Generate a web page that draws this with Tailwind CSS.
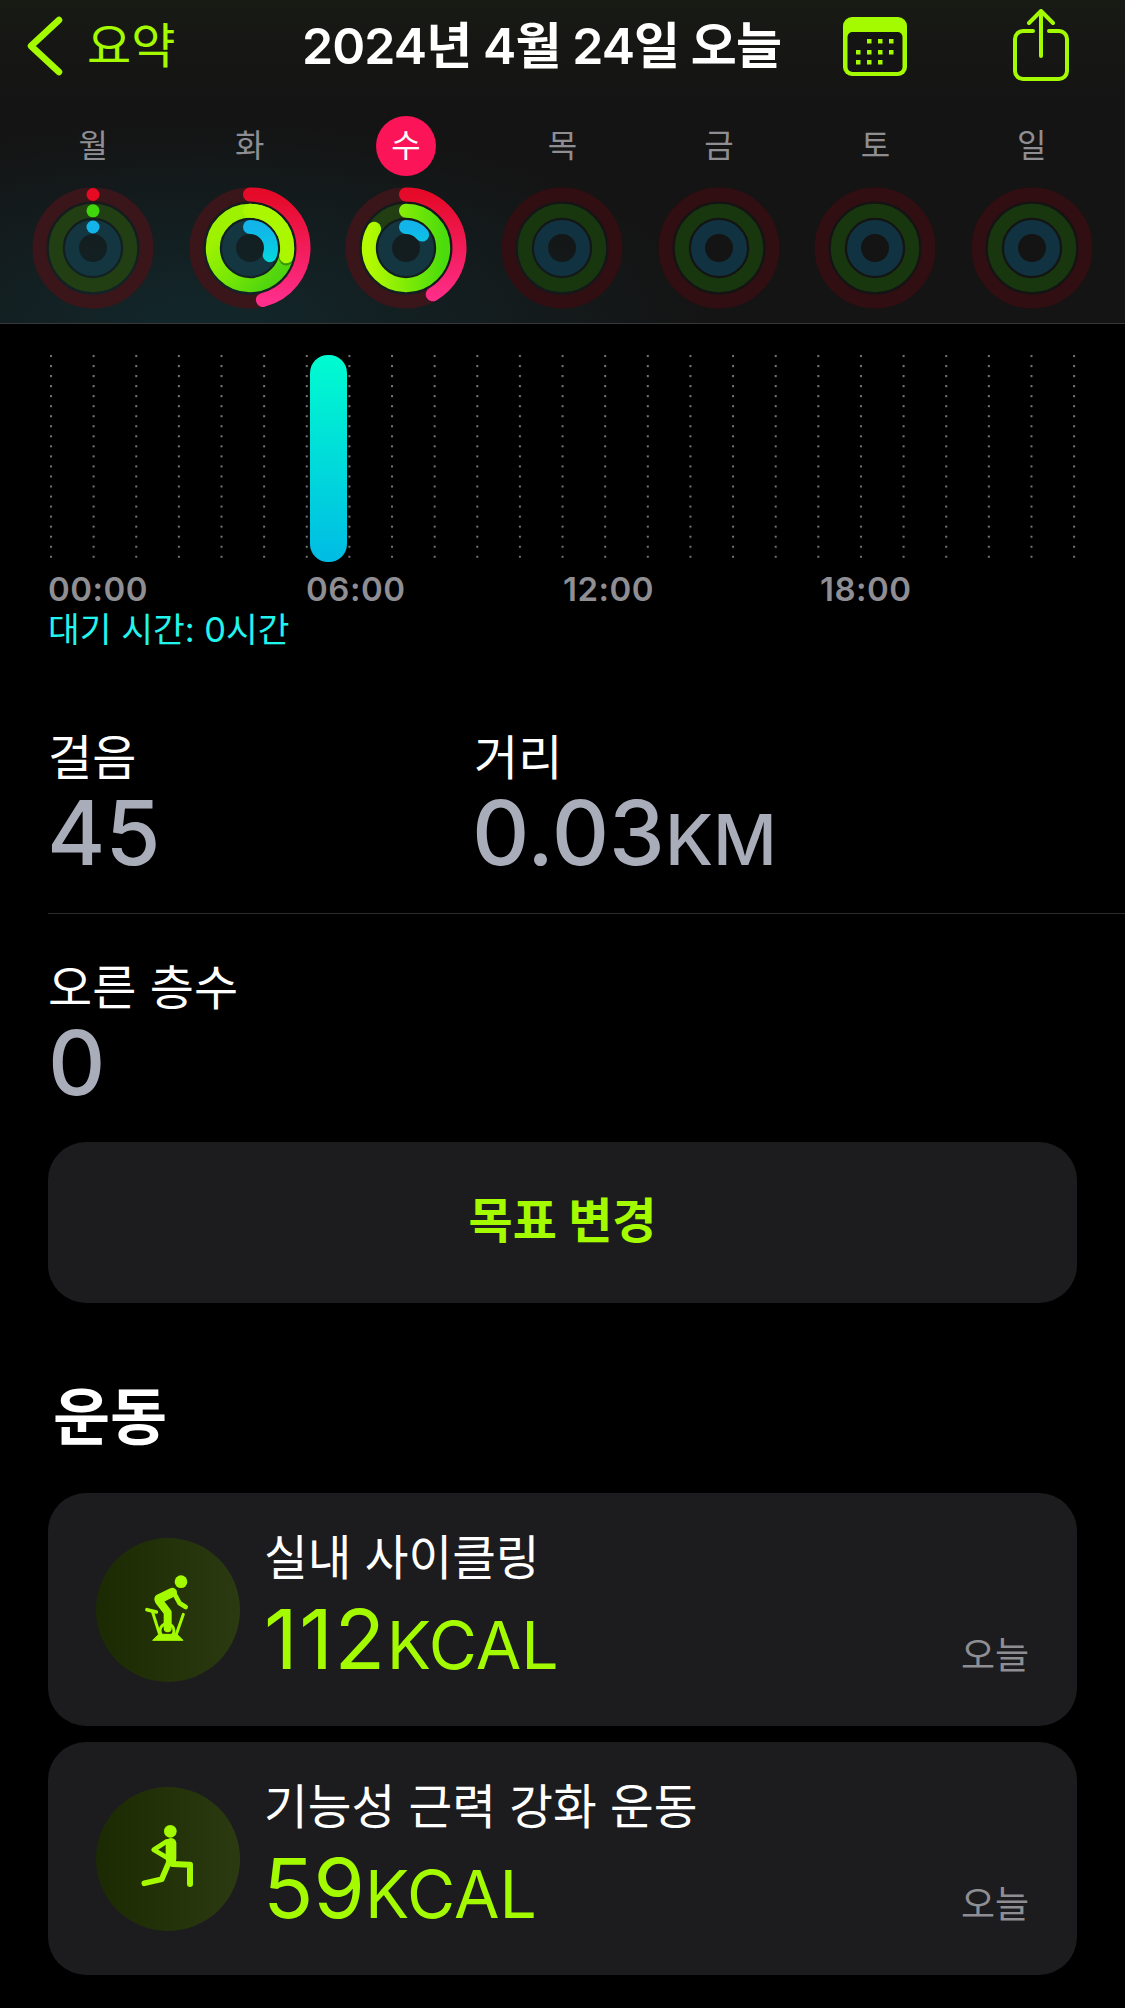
<!DOCTYPE html>
<html lang="ko">
<head>
    <meta charset="UTF-8">
    <title>활동 요약</title>
    <script src="https://cdn.jsdelivr.net/npm/@tailwindcss/browser@4"></script>
</head>
<body class="bg-black">
    <!-- Shared ring defs -->
    <svg class="absolute w-0 h-0">
        <defs>
            <linearGradient id="redArc" x1="1" y1="0" x2="0" y2="0"><stop offset="0" stop-color="#e50a28"/><stop offset="1" stop-color="#ff2e8c"/></linearGradient>
            <linearGradient id="greenFull" x1="0.9" y1="0.85" x2="0.2" y2="0.2"><stop offset="0" stop-color="#4fd40f"/><stop offset="0.5" stop-color="#78e804"/><stop offset="1" stop-color="#9ef200"/></linearGradient>
            <linearGradient id="greenArc" x1="0.5" y1="1" x2="0.5" y2="0"><stop offset="0" stop-color="#4cdc0c"/><stop offset="1" stop-color="#b4fa00"/></linearGradient>
            <linearGradient id="blueArc" x1="1" y1="0" x2="0" y2="0"><stop offset="0" stop-color="#12b4ea"/><stop offset="1" stop-color="#00dfdc"/></linearGradient>
            <linearGradient id="standBar" x1="0" y1="0" x2="0" y2="1"><stop offset="0" stop-color="#00fcd0"/><stop offset="1" stop-color="#00bce4"/></linearGradient>
            <pattern id="dots" x="0" y="0" width="42.63" height="10.04" patternUnits="userSpaceOnUse"><rect x="2" y="0" width="2" height="2" fill="#77777c"/></pattern>
            <symbol id="ringsEmpty" viewBox="0 0 122 122">
                <circle cx="61" cy="61" r="53.5" fill="none" stroke="#300e12" stroke-width="14"/>
                <circle cx="61" cy="61" r="37.2" fill="none" stroke="#19370f" stroke-width="14"/>
                <circle cx="61" cy="61" r="21" fill="none" stroke="#113240" stroke-width="14"/>
            </symbol>
        </defs>
    </svg>

    <div class="w-[1125px] h-[2008px] overflow-hidden bg-black text-white font-['Inter','Noto_Sans_CJK_KR',sans-serif]">
        <!-- Header -->
        <header class="h-[324px] border-b border-[#38383a] bg-[radial-gradient(ellipse_500px_200px_at_18%_100%,#12272b_0%,#14181a00_100%),linear-gradient(180deg,#181a14_0%,#141414_30%)]">
            <div class="h-[92px] flex items-center relative">
                <svg class="ml-[27px] w-[36px] h-[60px]" viewBox="0 0 36 60" fill="none" stroke="#a4fb00" stroke-width="6.5" stroke-linecap="round" stroke-linejoin="round"><path d="M32 4 L4 30 L32 56"/></svg>
                <span class="ml-[24px] w-[92px] text-[48px] leading-none text-[#a4fb00] whitespace-nowrap">요약</span>
                <h1 class="ml-[123px] w-[483px] text-[50px] leading-none font-semibold tracking-[-0.9px] whitespace-nowrap">2024년 4월 24일 오늘</h1>
                <svg class="ml-[58px] w-[64px] h-[59px]" viewBox="0 0 64 59">
                    <rect width="64" height="59" rx="9" fill="#a4fb00"/>
                    <rect x="4.5" y="15" width="55" height="40" rx="5" fill="#141414"/>
                    <g fill="#a4fb00">
                        <rect x="24" y="22" width="4.5" height="4.5"/><rect x="35" y="22" width="4.5" height="4.5"/><rect x="46" y="22" width="4.5" height="4.5"/>
                        <rect x="13" y="33" width="4.5" height="4.5"/><rect x="24" y="33" width="4.5" height="4.5"/><rect x="35" y="33" width="4.5" height="4.5"/><rect x="46" y="33" width="4.5" height="4.5"/>
                        <rect x="13" y="43" width="4.5" height="4.5"/><rect x="24" y="43" width="4.5" height="4.5"/><rect x="35" y="43" width="4.5" height="4.5"/>
                    </g>
                </svg>
                <svg class="ml-[106px] w-[56px] h-[72px] -mt-[2px]" viewBox="0 0 56 72" fill="none" stroke="#a4fb00" stroke-width="4" stroke-linecap="round" stroke-linejoin="round">
                    <path d="M20 22 H10 a8 8 0 0 0 -8 8 V62 a8 8 0 0 0 8 8 H46 a8 8 0 0 0 8 -8 V30 a8 8 0 0 0 -8 -8 H36"/>
                    <path d="M28 47 V3 M16 14 L28 2 L40 14"/>
                </svg>
            </div>

            <!-- Week rings -->
            <div class="grid grid-cols-7 pl-[15px] pr-[15px]">
                <div class="flex flex-col items-center">
                    <div class="h-[60px] flex items-center text-[#8e8e93] text-[32px] leading-none mt-[24px]">월</div>
                    <svg class="w-[122px] h-[122px] mt-[11px]" viewBox="0 0 122 122">
                        <circle cx="61" cy="61" r="53.5" fill="none" stroke="#3a1519" stroke-width="14"/>
                        <circle cx="61" cy="61" r="37.2" fill="none" stroke="#213f12" stroke-width="14"/>
                        <circle cx="61" cy="61" r="21" fill="none" stroke="#143640" stroke-width="14"/>
                        <circle cx="61" cy="7.5" r="6.5" fill="#e60a22"/><circle cx="61" cy="23.8" r="6.5" fill="#3fd60c"/><circle cx="61" cy="40" r="6.5" fill="#12b4ea"/>
                    </svg>
                </div>
                <div class="flex flex-col items-center">
                    <div class="h-[60px] flex items-center text-[#8e8e93] text-[32px] leading-none mt-[24px]">화</div>
                    <svg class="w-[122px] h-[122px] mt-[11px]" viewBox="0 0 122 122" fill="none" stroke-width="14" stroke-linecap="round">
                        <circle cx="61" cy="61" r="53.5" stroke="#3a1519"/>
                        <circle cx="61" cy="61" r="37.2" stroke="url(#greenFull)"/>
                        <circle cx="61" cy="61" r="21" stroke="#143640"/>
                        <circle cx="61" cy="61" r="53.5" stroke="url(#redArc)" pathLength="360" stroke-dasharray="166 400" transform="rotate(-90 61 61)"/>
                        <circle cx="97" cy="71.5" r="7" fill="#000" fill-opacity="0.3" stroke="none"/>
                        <circle cx="61" cy="61" r="37.2" stroke="#aaf700" pathLength="360" stroke-dasharray="103 400" transform="rotate(-90 61 61)"/>
                        <circle cx="61" cy="61" r="21" stroke="url(#blueArc)" pathLength="360" stroke-dasharray="110 400" transform="rotate(-90 61 61)"/>
                    </svg>
                </div>
                <div class="flex flex-col items-center">
                    <div class="w-[60px] h-[60px] rounded-full bg-[#fb1457] text-white flex items-center justify-center text-[32px] leading-none mt-[24px]">수</div>
                    <svg class="w-[122px] h-[122px] mt-[11px]" viewBox="0 0 122 122" fill="none" stroke-width="14" stroke-linecap="round">
                        <circle cx="61" cy="61" r="53.5" stroke="#3a1519"/>
                        <circle cx="61" cy="61" r="37.2" stroke="#213f12"/>
                        <circle cx="61" cy="61" r="21" stroke="#143640"/>
                        <circle cx="61" cy="61" r="53.5" stroke="url(#redArc)" pathLength="360" stroke-dasharray="150 400" transform="rotate(-90 61 61)"/>
                        <circle cx="61" cy="61" r="37.2" stroke="url(#greenArc)" pathLength="360" stroke-dasharray="301 400" transform="rotate(-90 61 61)"/>
                        <circle cx="61" cy="61" r="21" stroke="url(#blueArc)" pathLength="360" stroke-dasharray="50 400" transform="rotate(-90 61 61)"/>
                    </svg>
                </div>
                <div class="flex flex-col items-center">
                    <div class="h-[60px] flex items-center text-[#8e8e93] text-[32px] leading-none mt-[24px]">목</div>
                    <svg class="w-[122px] h-[122px] mt-[11px]"><use href="#ringsEmpty"/></svg>
                </div>
                <div class="flex flex-col items-center">
                    <div class="h-[60px] flex items-center text-[#8e8e93] text-[32px] leading-none mt-[24px]">금</div>
                    <svg class="w-[122px] h-[122px] mt-[11px]"><use href="#ringsEmpty"/></svg>
                </div>
                <div class="flex flex-col items-center">
                    <div class="h-[60px] flex items-center text-[#8e8e93] text-[32px] leading-none mt-[24px]">토</div>
                    <svg class="w-[122px] h-[122px] mt-[11px]"><use href="#ringsEmpty"/></svg>
                </div>
                <div class="flex flex-col items-center">
                    <div class="h-[60px] flex items-center text-[#8e8e93] text-[32px] leading-none mt-[24px]">일</div>
                    <svg class="w-[122px] h-[122px] mt-[11px]"><use href="#ringsEmpty"/></svg>
                </div>
            </div>
        </header>

        <!-- Stand chart -->
        <section class="pl-[48px] pt-[31px]">
            <svg class="block w-[1030px] h-[207px]" viewBox="0 0 1030 207">
                <rect x="0" y="0" width="1030" height="203" fill="url(#dots)"/>
                <rect x="262" y="0" width="37" height="207" rx="18" fill="url(#standBar)"/>
            </svg>
            <div class="flex h-[44px] mt-[5px] items-center text-[33px] leading-none font-semibold text-[#8e8e93] tracking-[0.5px]">
                <span class="w-[258px]">00:00</span><span class="w-[257px]">06:00</span><span class="w-[257px]">12:00</span><span>18:00</span>
            </div>
            <p class="text-[34.5px] leading-[36px] text-[#22f5ee] mt-[1px]">대기 시간: 0시간</p>
        </section>

        <!-- Stats -->
        <section class="pl-[48px] mt-[83px]">
            <div class="flex h-[183px] border-b border-[#2c2c2e] mb-[47px]">
                <div class="w-[426px]">
                    <div class="text-[48px] leading-[54px]">걸음</div>
                    <div class="h-[96px] text-[89px] leading-[96px] font-medium text-[#a9adba] -ml-[1px]">45</div>
                </div>
                <div>
                    <div class="text-[48px] leading-[54px]">거리</div>
                    <div class="h-[96px] text-[89px] leading-[96px] font-medium text-[#a9adba] -ml-[2px] whitespace-nowrap">0.03<span class="text-[70px]">KM</span></div>
                </div>
            </div>
            <div class="text-[48px] leading-[54px]">오른 층수</div>
            <div class="text-[89px] leading-[96px] font-medium text-[#a9adba]">0</div>
        </section>

        <!-- Goal button -->
        <div class="mx-[48px] mt-[31px] h-[161px] pb-[4px] rounded-[38px] bg-[#1c1c1e] flex items-center justify-center text-[48px] font-bold text-[#a4fb00]">목표 변경</div>

        <!-- Workouts -->
        <h2 class="ml-[53px] mt-[75px] h-[80px] text-[62px] leading-[80px] font-bold">운동</h2>

        <div class="mx-[48px] mt-[35px] flex flex-col gap-[16px]">
            <div class="h-[233px] rounded-[38px] bg-[#1c1c1e] flex items-center relative pl-[48px]">
                <div class="w-[144px] h-[144px] rounded-full bg-gradient-to-r from-[#1c2a03] to-[#2c3a12] flex items-center justify-center">
                    <svg class="w-[75px] h-[90px]" viewBox="0 0 225 270" fill="none" stroke="#a4fb00" stroke-linecap="round" stroke-linejoin="round">
                        <circle cx="150" cy="50" r="19" fill="#a4fb00" stroke="none"/>
                        <path d="M84 102 L124 82" stroke-width="28"/>
                        <path d="M128 82 L146 115 L164 126" stroke-width="14"/>
                        <path d="M84 108 L110 142 L110 190" stroke-width="24"/>
                        <path d="M48 134 L76 141" stroke-width="11"/>
                        <path d="M65 142 L85 205" stroke-width="9"/>
                        <path d="M157 148 L136 208" stroke-width="9"/>
                        <circle cx="108" cy="197" r="21" stroke-width="9"/>
                        <path d="M66 226 H156 L138 208 H84 Z" fill="#a4fb00" stroke-width="3"/>
                    </svg>
                </div>
                <div class="ml-[24px] -mt-[1px]">
                    <div class="text-[47.5px] leading-[66px] whitespace-nowrap">실내 사이클링</div>
                    <div class="text-[83px] leading-[96px] tracking-[1.5px] text-[#a4fb00] whitespace-nowrap">112<span class="text-[66px] tracking-normal">KCAL</span></div>
                </div>
                <span class="absolute right-[48px] bottom-[52px] text-[37px] leading-none text-[#8e8e93]">오늘</span>
            </div>
            <div class="h-[233px] rounded-[38px] bg-[#1c1c1e] flex items-center relative pl-[48px]">
                <div class="w-[144px] h-[144px] rounded-full bg-gradient-to-r from-[#1c2a03] to-[#2c3a12] flex items-center justify-center">
                    <svg class="w-[75px] h-[90px]" viewBox="0 0 225 270" fill="none" stroke="#a4fb00" stroke-linecap="round" stroke-linejoin="round">
                        <circle cx="118" cy="52" r="19" fill="#a4fb00" stroke="none"/>
                        <path d="M120 88 L120 135" stroke-width="32"/>
                        <path d="M108 82 L68 107 L106 130" stroke-width="14"/>
                        <path d="M116 140 L92 196 L40 208" stroke-width="17"/>
                        <path d="M125 150 L177 152 L177 210" stroke-width="18"/>
                    </svg>
                </div>
                <div class="ml-[24px] -mt-[1px]">
                    <div class="text-[47.5px] leading-[66px] whitespace-nowrap">기능성 근력 강화 운동</div>
                    <div class="text-[83px] leading-[96px] text-[#a4fb00] -ml-[1px] whitespace-nowrap">59<span class="text-[66px]">KCAL</span></div>
                </div>
                <span class="absolute right-[48px] bottom-[52px] text-[37px] leading-none text-[#8e8e93]">오늘</span>
            </div>
        </div>
    </div>
</body>
</html>
